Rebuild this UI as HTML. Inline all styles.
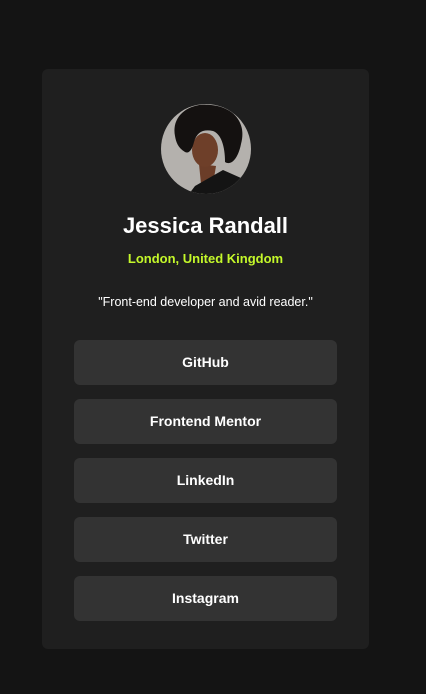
<!DOCTYPE html>
<html><head><meta charset="utf-8"><style>
*{margin:0;padding:0;box-sizing:border-box}
body{width:426px;height:694px;background:#141414;font-family:"Liberation Sans",sans-serif;color:#fff;position:relative;overflow:hidden}
.card{position:absolute;left:42px;top:69px;width:327px;height:580px;background:#1f1f1f;border-radius:6px}
.av{position:absolute;left:119px;top:35px;width:90px;height:90px;border-radius:50%;overflow:hidden}
h1{position:absolute;top:144px;left:0;right:0;text-align:center;font-size:22px;font-weight:bold}
.loc{position:absolute;top:182px;left:0;right:0;text-align:center;font-size:13px;font-weight:bold;color:#c4f82a}
.q{position:absolute;top:226px;left:0;right:0;text-align:center;font-size:12.5px}
.b{position:absolute;left:32px;width:263px;height:45px;background:#333;border-radius:6px;text-align:center;line-height:45px;font-size:14px;font-weight:bold}
</style></head><body>
<div class="card">
<div class="av"><svg width="90" height="90" viewBox="0 0 90 90">
<rect width="90" height="90" fill="#b4b1ad"/>
<path d="M38 60 L55 62 L52 80 L40 80 Z" fill="#6b3d28"/>
<ellipse cx="44" cy="46" rx="13" ry="17" fill="#6e3f29"/>
<path d="M14 32 C10 12 28 -2 50 1 C72 3 86 18 80 40 C77 55 70 62 64 58 C64 42 60 30 52 27 C42 25 36 28 33 38 C31 46 28 50 24 48 C17 44 15 38 14 32Z" fill="#141110"/>
<path d="M34 82 L62 66 L80 74 L90 90 L28 90Z" fill="#141414"/>
</svg></div>
<h1>Jessica Randall</h1>
<div class="loc">London, United Kingdom</div>
<div class="q">"Front-end developer and avid reader."</div>
<div class="b" style="top:271px">GitHub</div>
<div class="b" style="top:330px">Frontend Mentor</div>
<div class="b" style="top:389px">LinkedIn</div>
<div class="b" style="top:448px">Twitter</div>
<div class="b" style="top:507px">Instagram</div>
</div>
</body></html>
